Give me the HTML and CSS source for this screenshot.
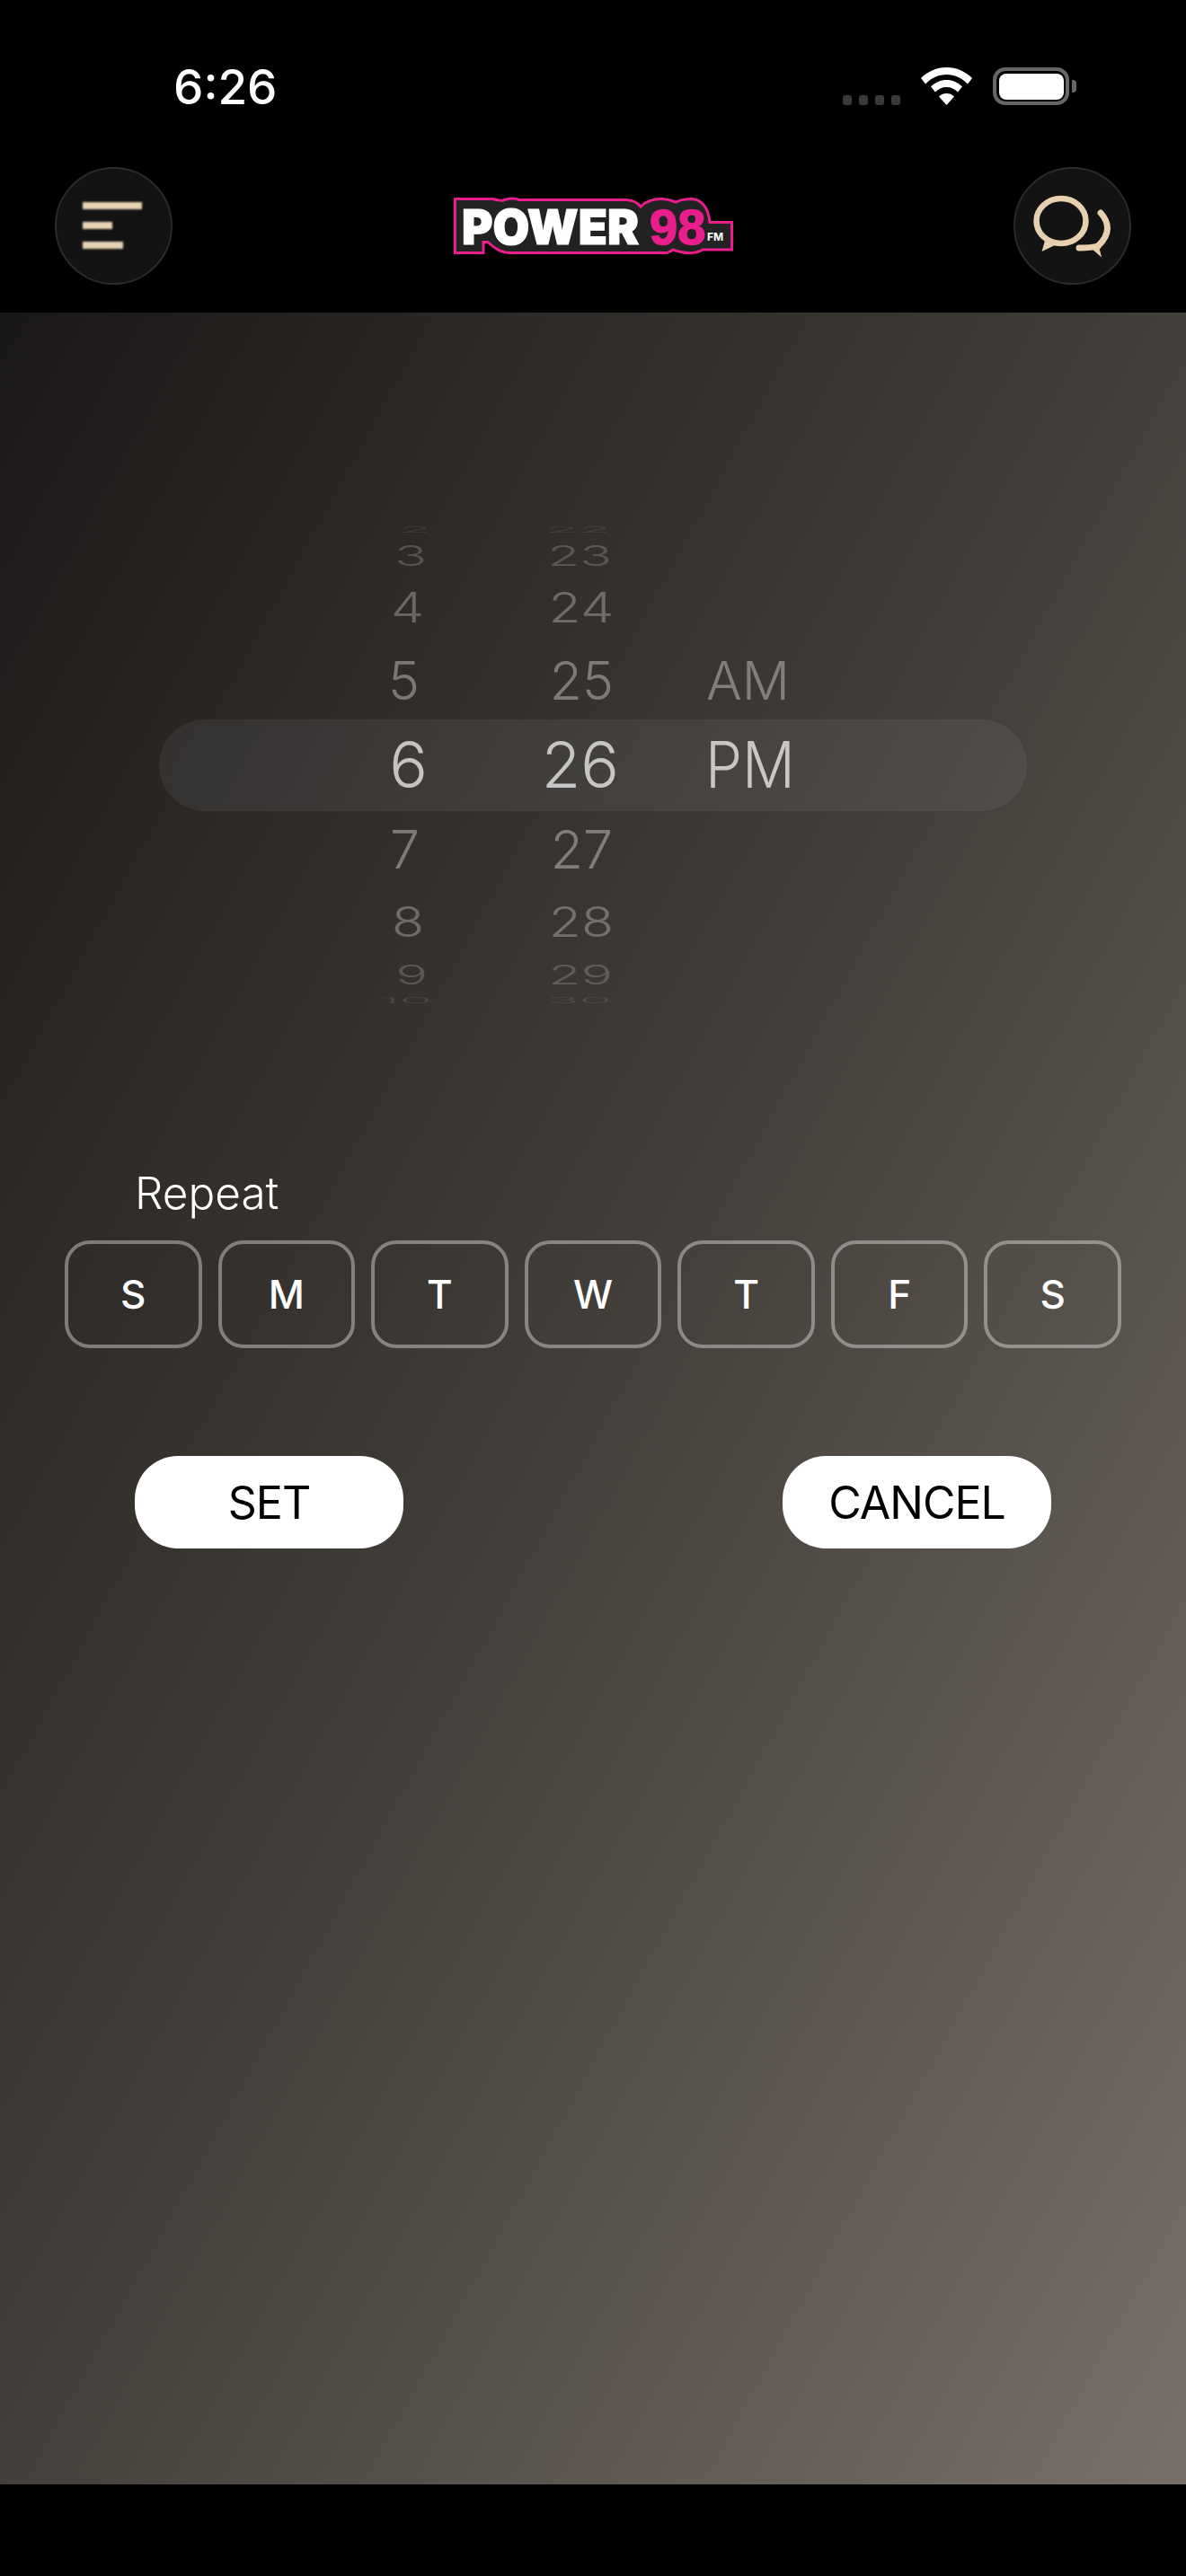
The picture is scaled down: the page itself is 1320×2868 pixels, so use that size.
FILE: index.html
```html
<!DOCTYPE html>
<html lang="en">
<head>
<meta charset="utf-8">
<title>Power 98 FM alarm</title>
<link rel="stylesheet" href="styles.css">
</head>
<body>
<div class="app">
  <header class="header">
    <div class="status">
      <span class="time">6:26</span>
      <div class="status-icons">
        <div class="signal"><i></i><i></i><i></i><i></i></div>
        <svg class="wifi" viewBox="0 0 57 42"><path d="M28.5 0C39.5 0 49.5 4.5 57 12L52 18.5C45.5 12 37.5 8 28.5 8C19.5 8 11.5 12 5 18.5L0 12C7.5 4.5 17.5 0 28.5 0Z"/><path d="M28.5 14C35 14 41 16.5 46 21.5L41 27.5C37.5 24 33.5 22 28.5 22C23.5 22 19.5 24 16 27.5L11 21.5C16 16.5 22 14 28.5 14Z"/><path d="M28.5 29C32 29 34.5 30 37 32.5L28.5 42L20 32.5C22.5 30 25 29 28.5 29Z"/></svg>
        <div class="battery"><div class="battery-body"><div class="battery-fill"></div></div><div class="battery-nub"></div></div>
      </div>
    </div>
    <div class="topbar">
      <button class="round-btn menu-btn" aria-label="Menu"><i class="bar bar-a"></i><i class="bar bar-b"></i><i class="bar bar-c"></i></button>
      <svg class="logo" viewBox="0 -8 311 79">
        <path class="logo-shape" d="M1.5 1.5H43C49 2.5 52 4 55 3C62 .5 68 .5 73 2.5H192C200 3 205 6 208 10C214 4 222 1.5 231 1.5C237 1.5 242 3 247 5C252 2.5 258 1.5 264 1.5C275 2 283 9 285 27.5H309.5V58H277C272 61 266 62 260 61.5C255 61.5 250 60 244 58C241 60 239 61.5 237 61.5H85C78 61.5 72 61.5 63 61.5C52 61.5 45 56 38 49.5H33V61.5H1.5Z"/>
        <text class="logo-power" x="9" y="52" textLength="197" lengthAdjust="spacingAndGlyphs">POWER</text>
        <text class="logo-98" x="218" y="52">98</text>
        <text class="logo-fm" x="282" y="48">FM</text>
      </svg>
      <button class="round-btn chat-btn" aria-label="Chat">
        <svg class="chat-icon" viewBox="0 0 90 74"><ellipse cx="31" cy="30" rx="27.5" ry="25" class="chat-line"/><path class="chat-fill" d="M14 48L9.6 64L26 56Z"/><path class="chat-line chat-cap" d="M75 21C84 31 87 44 72 58"/><path class="chat-line chat-cap" d="M72 58C65 60 58 60 51 60"/><path class="chat-fill" d="M64 60L76 70.5L72 54Z"/></svg>
      </button>
    </div>
  </header>

  <main class="main">
    <section class="picker">
      <div class="selection"></div>
      <div class="wheel hours">
        <div class="row r1"><span>2</span></div>
        <div class="row r2"><span>3</span></div>
        <div class="row r3"><span>4</span></div>
        <div class="row r4"><span>5</span></div>
        <div class="row r5"><span>6</span></div>
        <div class="row r6"><span>7</span></div>
        <div class="row r7"><span>8</span></div>
        <div class="row r8"><span>9</span></div>
        <div class="row r9"><span>10</span></div>
      </div>
      <div class="wheel minutes">
        <div class="row r1"><span>22</span></div>
        <div class="row r2"><span>23</span></div>
        <div class="row r3"><span>24</span></div>
        <div class="row r4"><span>25</span></div>
        <div class="row r5"><span>26</span></div>
        <div class="row r6"><span>27</span></div>
        <div class="row r7"><span>28</span></div>
        <div class="row r8"><span>29</span></div>
        <div class="row r9"><span>30</span></div>
      </div>
      <div class="wheel period">
        <div class="row r4"><span>AM</span></div>
        <div class="row r5"><span>PM</span></div>
      </div>
    </section>

    <h2 class="repeat">Repeat</h2>
    <div class="days">
      <button class="day">S</button>
      <button class="day">M</button>
      <button class="day">T</button>
      <button class="day">W</button>
      <button class="day">T</button>
      <button class="day">F</button>
      <button class="day">S</button>
    </div>
    <div class="actions">
      <button class="action">SET</button>
      <button class="action">CANCEL</button>
    </div>
  </main>
  <footer class="footer"></footer>
</div>
</body>
</html>
```

FILE: styles.css
```css
* { box-sizing: border-box; }
html, body { margin: 0; padding: 0; background: #000; }
body { font-family: Inter, "Liberation Sans", sans-serif; color: #fff; }
button { font-family: inherit; margin: 0; padding: 0; border: 0; background: none; }

.app { width: 1320px; height: 2868px; display: flex; flex-direction: column; background: #000; overflow: hidden; }
.header { height: 348px; flex: none; background: #000; }

.status { height: 186px; padding: 75px 122px 0 193px; display: flex; justify-content: space-between; align-items: flex-start; }
.time { font-size: 53px; font-weight: 500; line-height: 44px; height: 44px; }
.status-icons { display: flex; align-items: flex-end; gap: 23px; height: 42px; }
.signal { display: flex; gap: 7.5px; }
.signal i { display: block; width: 10.5px; height: 11px; border-radius: 3px; background: #3a3a3a; }
.wifi { display: block; width: 57px; height: 42px; fill: #fff; }
.battery { display: flex; align-items: center; gap: 3px; }
.battery-body { width: 85px; height: 42px; border: 4px solid #666; border-radius: 14px; padding: 2.5px; }
.battery-fill { width: 100%; height: 100%; background: #fff; border-radius: 8px; }
.battery-nub { width: 5px; height: 14px; background: #666; border-radius: 0 4px 4px 0; }

.topbar { height: 131px; padding: 0 61px; display: flex; justify-content: space-between; align-items: center; }
.round-btn { width: 131px; height: 131px; border-radius: 50%; background: #131313; border: 2.5px solid #2c2c2c; position: relative; }
.menu-btn { display: flex; flex-direction: column; align-items: flex-start; gap: 14px; padding: 37px 0 0 29px; }
.bar { display: block; height: 8px; background: #e6d3b3; filter: blur(.8px); }
.bar-a { width: 66px; }
.bar-b { width: 33px; }
.bar-c { width: 45px; }
.logo { display: block; width: 311px; height: 79px; }
.logo-shape { fill: #222; stroke: #e91e8c; stroke-width: 3; }
.logo-power { font-family: Inter, sans-serif; font-weight: 900; font-size: 53px; fill: #fff; stroke: #fff; stroke-width: 1.2; }
.logo-98 { font-family: "Liberation Sans", sans-serif; font-weight: 700; font-size: 56px; fill: #e91e8c; stroke: #e91e8c; stroke-width: 1.5; }
.logo-fm { font-family: Inter, sans-serif; font-weight: 700; font-size: 12px; fill: #fff; }
.chat-btn { display: flex; align-items: center; justify-content: center; }
.chat-icon { display: block; width: 90px; height: 74px; margin: 2px 0 0 2px; }
.chat-line { fill: none; stroke: #e6d0ae; stroke-width: 6.5; }
.chat-cap { stroke-linecap: round; stroke-width: 7; }
.chat-fill { fill: #e6d0ae; }

.main { height: 2418px; flex: none; padding-top: 242px; background: linear-gradient(to bottom right, #1a1817 0%, #433f3a 50%, #787068 100%); }

.picker { position: relative; height: 553px; display: flex; font-weight: 350; }
.selection { position: absolute; left: 177px; top: 211px; width: 966px; height: 102px; border-radius: 51px; background: rgba(210, 210, 225, .075); }
.wheel { position: relative; flex: none; }
.hours { width: 200px; margin-left: 270px; text-align: right; }
.minutes { width: 213px; text-align: right; }
.period { width: 200px; margin-left: 100px; padding-top: 168px; text-align: left; }
.row { line-height: 0; font-size: 59px; color: rgba(255, 255, 255, var(--a)); }
.row span { display: block; height: 0; transform-origin: left top; transform: translateX(var(--dx, 0)) scale(var(--sx, 1), var(--sy)); }
.hours .row span, .minutes .row span { transform-origin: right top; }
.r1 { height: 29px; --a: .1; --sy: .14; }
.r2 { height: 57.5px; --a: .2; --sy: .52; }
.r3 { height: 81.5px; --a: .29; --sy: .78; }
.r4 { height: 92.5px; --a: .36; --sy: 1; }
.r5 { height: 95.5px; --a: .7; --sy: 1; font-size: 71px; }
.r6 { height: 80.5px; --a: .36; --sy: 1; }
.r7 { height: 58px; --a: .29; --sy: .78; }
.r8 { height: 29px; --a: .2; --sy: .5; }
.r9 { height: 30px; --a: .1; --sy: .14; }
.hours .r1 { --dx: 10px; }
.hours .r2 { --dx: 5px; }
.hours .r3 { --dx: 2px; }
.hours .r4 { --dx: -3px; }
.hours .r5 { --dx: 6px; }
.hours .r6 { --dx: -3px; }
.hours .r7 { --dx: 2px; }
.hours .r8 { --dx: 6px; }
.hours .r9 { --dx: 11px; }
.minutes .r1 { --dx: -3px; }
.minutes .r2 { --dx: -2px; }
.minutes .r5 { --dx: 6px; }
.minutes .r6 { --dx: -1px; }
.minutes .r8 { --dx: -1px; }
.minutes .r9 { --dx: -2px; }
.period .r4 { --dx: 3px; }
.period .r5 { --dx: 2px; --sx: .92; }

.repeat { margin: 155px 0 0; padding-left: 150px; height: 60px; font-size: 49.5px; line-height: 60px; font-weight: 300; }
.days { margin-top: 23px; padding: 0 72px; display: flex; gap: 18px; }
.day { flex: 1 1 0; height: 120px; border: 4px solid rgba(255, 255, 255, .38); border-radius: 28px; color: #fff; font-size: 44px; font-weight: 500; }
.actions { margin-top: 120px; padding: 0 150px; display: flex; justify-content: space-between; }
.action { width: 299px; height: 103px; border-radius: 48px; background: #fff; color: #000; font-size: 50px; font-weight: 400; letter-spacing: -1px; }
.footer { flex: 1; background: #000; }
```
